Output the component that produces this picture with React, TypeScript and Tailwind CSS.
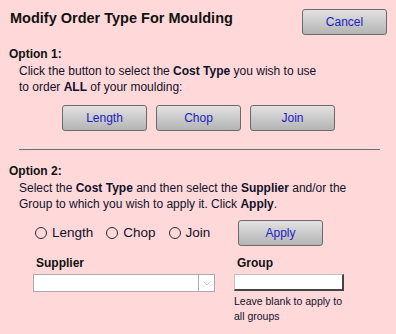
import React from 'react';

const COST_TYPES = ['Length', 'Chop', 'Join'];

const GreyButton: React.FC<{ label: string; className?: string }> = ({ label, className }) => (
  <button
    className={`w-[85px] h-[26px] rounded-[3px] border border-[#6a6a6a] bg-gradient-to-b from-[#e2e2e2] to-[#b4b4b4] text-[12px] text-[#1c1cc4] ${className ?? ''}`}
  >
    {label}
  </button>
);

export default function App() {
  return (
    <div className="w-[396px] h-[334px] bg-[#ffd9d9] text-[#10102a] text-[12px] leading-[16px] font-['Liberation_Sans',Arial,sans-serif] overflow-hidden">
      <div className="flex items-start justify-between pl-[10px] pr-[9px] pt-[9px]">
        <h1 className="text-[14.5px] font-bold leading-[18px] text-[#111]">Modify Order Type For Moulding</h1>
        <GreyButton label="Cancel" />
      </div>

      <div className="pl-[9px] mt-[11px]">
        <div className="font-bold text-[#111]">Option 1:</div>
        <p className="pl-[10px] mt-[1px]">
          Click the button to select the <b>Cost Type</b> you wish to use
          <br />
          to order <b>ALL</b> of your moulding:
        </p>
      </div>

      <div className="flex gap-[9px] pl-[62px] mt-[10px]">
        {COST_TYPES.map((t) => (
          <GreyButton key={t} label={t} />
        ))}
      </div>

      <div className="ml-[19px] mr-[16px] mt-[18px] h-px bg-[#6e6e6e]" />

      <div className="pl-[9px] mt-[13px]">
        <div className="font-bold text-[#111]">Option 2:</div>
        <p className="pl-[10px] mt-[1px]">
          Select the <b>Cost Type</b> and then select the <b>Supplier</b> and/or the
          <br />
          Group to which you wish to apply it. Click <b>Apply</b>.
        </p>
      </div>

      <div className="flex items-center pl-[35px] mt-[8px]">
        <div className="flex items-center gap-[13px] text-[13.5px] leading-[18px]">
          {COST_TYPES.map((t) => (
            <label key={t} className="flex items-center gap-[5px]">
              <span className="w-[12px] h-[12px] rounded-full border border-[#2a2a2a]" />
              {t}
            </label>
          ))}
        </div>
        <div className="flex-1" />
        <GreyButton label="Apply" className="mr-[73px]" />
      </div>

      <div className="flex pl-[33px] mt-[9px]">
        <div className="flex flex-col w-[182px]">
          <div className="font-bold pl-[3px] text-[#111]">Supplier</div>
          <div className="mt-[3px] flex h-[18px] border border-[#aaa] bg-white">
            <div className="flex-1" />
            <div className="w-[16px] border-l border-[#aaa] flex items-center justify-center">
              <svg width="8" height="5" viewBox="0 0 8 5">
                <path d="M0.5 0.5 L4 4 L7.5 0.5" fill="none" stroke="#c4c4c4" strokeWidth="1" />
              </svg>
            </div>
          </div>
        </div>
        <div className="flex flex-col ml-[19px]">
          <div className="font-bold pl-[3px] text-[#111]">Group</div>
          <div className="mt-[3px] w-[110px] h-[17px] bg-white border border-[#c0c0c0] border-r-2 border-b-2 border-r-[#444] border-b-[#444]" />
          <p className="text-[10.5px] leading-[14.5px] mt-[3px]">
            Leave blank to apply to
            <br />
            all groups
          </p>
        </div>
      </div>
    </div>
  );
}
